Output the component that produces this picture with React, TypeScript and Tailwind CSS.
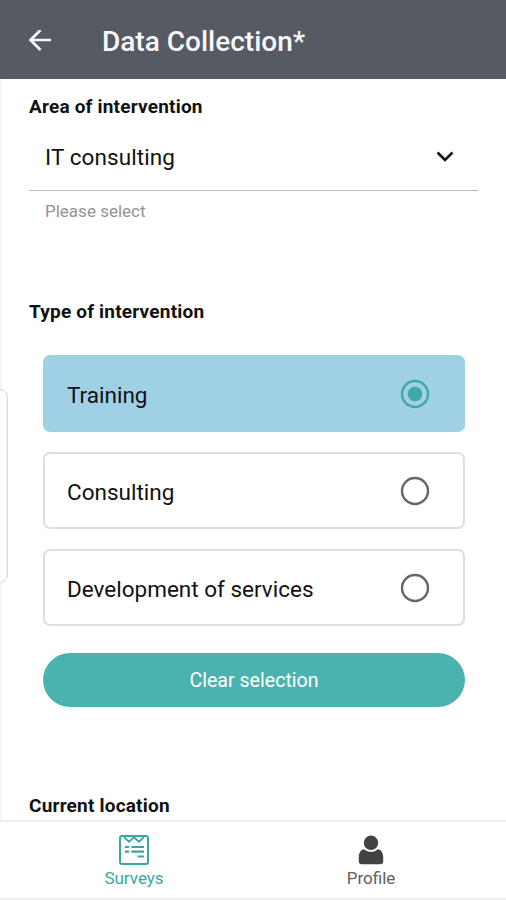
import { useState } from "react";

const options = ["Training", "Consulting", "Development of services"];

const RadioIcon = ({ checked }: { checked: boolean }) => (
  <svg
    className={`h-[30px] w-[30px] ${checked ? "text-[#3fa9a3]" : "text-[#666666]"}`}
    viewBox="0 0 30 30"
    fill="none"
  >
    <circle cx="15" cy="15" r="13" stroke="currentColor" strokeWidth="2.4" />
    {checked && <circle cx="15" cy="15" r="7.3" fill="currentColor" />}
  </svg>
);

const SurveysIcon = () => (
  <svg className="h-[30px] w-[30px]" viewBox="0 0 30 30" fill="none" stroke="currentColor">
    <rect x="1" y="1" width="28" height="28" rx="2" strokeWidth="2" />
    <path d="M5 2L10 6.8L15 2.4L20 6.8L25 2" strokeWidth="1.8" />
    <path d="M6 12H10M12.5 12H25M6 16.7H10M12.5 16.7H25M18.5 21.5H25" strokeWidth="2.2" />
  </svg>
);

const ProfileIcon = () => (
  <svg className="h-[30px] w-[26px]" viewBox="0 0 26 30" fill="currentColor">
    <circle cx="13" cy="7.8" r="7.2" />
    <path d="M6.2 14.2C8 15.9 10.4 16.8 13 16.8S18 15.9 19.8 14.2C23.4 14.8 25 17.6 25.2 22V26.2Q25.2 29.2 22.2 29.2H3.8Q0.8 29.2 0.8 26.2V22C1 17.6 2.6 14.8 6.2 14.2Z" />
  </svg>
);

const DataCollectionScreen = () => {
  const [selected, setSelected] = useState("Training");

  return (
    <div className="relative flex h-[900px] w-[506px] flex-col overflow-hidden bg-white font-['Roboto',sans-serif] text-[#111111]">
      {/* Header */}
      <header className="flex h-[79px] shrink-0 items-center bg-[#565a62] pt-1 text-[#f8f8fa]">
        <button className="ml-7 flex w-[74px]" aria-label="Back">
          <svg
            className="h-6 w-6"
            viewBox="0 0 24 24"
            fill="none"
            stroke="currentColor"
            strokeWidth="2.7"
          >
            <path d="M23 10H2.5M12.5 0L2.5 10L12.5 20" />
          </svg>
        </button>
        <h1 className="text-[28px] leading-8 font-medium">Data Collection*</h1>
      </header>

      {/* Form */}
      <main className="flex min-h-0 flex-1 flex-col overflow-hidden border-l-2 border-[#f5f5f5] pt-4 pr-7 pl-[27px]">
        <h2 className="text-[19px] leading-6 font-bold tracking-[0.2px]">Area of intervention</h2>
        <div className="flex h-[72px] shrink-0 items-center justify-between border-b-[1.5px] border-[#bdbdbd] pt-1 pr-6 pl-4">
          <span className="text-[22.5px] leading-7 tracking-[0.1px]">IT consulting</span>
          <svg
            className="h-[18px] w-[18px]"
            viewBox="0 0 18 18"
            fill="none"
            stroke="currentColor"
            strokeWidth="2.6"
          >
            <path d="M1.5 4.5L9 12L16.5 4.5" />
          </svg>
        </div>
        <p className="pt-2 pl-4 text-[17px] leading-6 text-[#949494]">Please select</p>

        <h2 className="mt-[77px] text-[19px] leading-6 font-bold tracking-[0.2px]">Type of intervention</h2>
        <div className="mt-[31px] flex flex-col gap-5 pr-[13px] pl-[14px]">
          {options.map((option) => (
            <div
              key={option}
              className={`flex h-[77px] items-center justify-between rounded-[7px] border-2 pr-[33px] pl-[22px] ${
                selected === option
                  ? "border-[#a0d0e6] bg-[#a0d0e6]"
                  : "border-[#dedede] bg-white"
              }`}
              onClick={() => setSelected(option)}
            >
              <span className="pt-[3px] text-[22.5px] leading-7">{option}</span>
              <RadioIcon checked={selected === option} />
            </div>
          ))}
          <button
            className="mt-[7px] h-[54px] rounded-full bg-[#4bb3af] pt-0.5 text-[19.6px] leading-6 text-white"
            onClick={() => setSelected("")}
          >
            Clear selection
          </button>
        </div>

        <h2 className="mt-[87px] text-[19px] leading-6 font-bold tracking-[0.2px]">Current location</h2>
      </main>

      {/* Bottom tabs */}
      <nav className="grid h-[80px] shrink-0 grid-cols-2 border-t-2 border-b-2 border-t-[#eeeeee] border-b-[#f0f0f0] bg-white">
        <button className="flex flex-col items-center pt-[13px] pl-[15px] text-[#3aa7a1]">
          <SurveysIcon />
          <span className="text-[17px] leading-[26px]">Surveys</span>
        </button>
        <button className="flex flex-col items-center pt-[13px] pr-[17px] text-[#424242]">
          <ProfileIcon />
          <span className="text-[17px] leading-[26px] text-[#606060]">Profile</span>
        </button>
      </nav>

      {/* Edge panel handle */}
      <div className="absolute top-[389px] -left-3 h-[194px] w-5 rounded-[8px] border-[1.5px] border-[#d7d7d7] bg-[#fcfcfc]" />
    </div>
  );
};

export default DataCollectionScreen;
